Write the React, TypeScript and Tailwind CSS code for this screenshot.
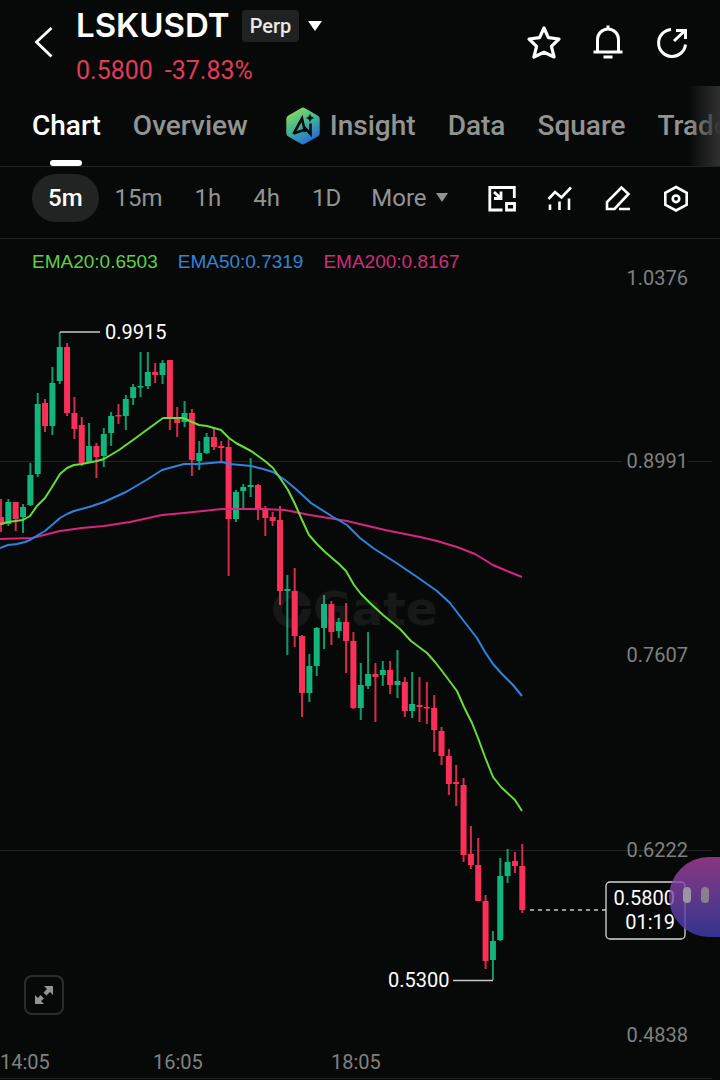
import { useState } from 'react';

type Candle = [number, number, number, number, number];

const UP = '#12b57c';
const DOWN = '#fb3059';
const FIRST_X = 1;
const STEP = 7.342;

// [up, high, body top, body bottom, low] in chart units
const candles: Candle[] = [
  [0, 499, 517, 525, 532], [1, 499, 502, 524, 526], [0, 502, 502, 519, 531], [1, 504, 507, 517, 533],
  [1, 463, 475, 505, 506], [1, 393, 404, 474, 477], [0, 399, 403, 426, 432], [1, 367, 383, 426, 435],
  [1, 332, 347, 381, 384], [0, 343, 347, 413, 416], [0, 397, 413, 429, 439], [0, 417, 425, 463, 466],
  [1, 423, 446, 463, 463], [0, 443, 446, 457, 478], [1, 428, 434, 456, 467], [1, 412, 416, 433, 446],
  [0, 404, 415, 416, 424], [1, 395, 399, 416, 430], [1, 384, 387, 398, 405], [1, 352, 386, 387, 397],
  [1, 352, 372, 386, 389], [0, 363, 372, 375, 383], [1, 360, 363, 375, 384], [0, 360, 360, 417, 430],
  [0, 407, 417, 423, 437], [1, 401, 413, 422, 427], [0, 409, 413, 460, 476], [1, 441, 453, 461, 470],
  [1, 433, 437, 453, 454], [0, 428, 437, 447, 450], [0, 441, 446, 448, 462], [0, 439, 447, 519, 576],
  [1, 490, 492, 519, 522], [1, 484, 487, 491, 509], [1, 458, 485, 487, 497], [0, 484, 485, 509, 520],
  [0, 506, 509, 518, 536], [0, 512, 517, 521, 526], [0, 506, 520, 591, 605], [1, 575, 589, 591, 655],
  [0, 568, 591, 636, 647], [0, 635, 636, 693, 717], [1, 654, 666, 693, 702], [1, 627, 628, 666, 676],
  [1, 595, 604, 628, 649], [0, 601, 604, 632, 645], [1, 618, 622, 631, 638], [0, 603, 622, 641, 673],
  [0, 632, 641, 708, 709], [1, 663, 685, 708, 720], [1, 632, 674, 686, 689], [0, 663, 674, 677, 722],
  [1, 661, 670, 675, 686], [0, 661, 670, 685, 694], [1, 650, 681, 685, 698], [0, 677, 682, 711, 717],
  [1, 672, 704, 711, 718], [0, 677, 705, 707, 722], [0, 682, 707, 708, 724], [0, 695, 708, 730, 752],
  [0, 727, 731, 756, 765], [0, 749, 756, 784, 795], [0, 765, 782, 784, 806], [0, 778, 785, 855, 862],
  [0, 826, 854, 865, 869], [0, 838, 865, 901, 901], [0, 895, 901, 961, 969], [1, 931, 941, 960, 980],
  [1, 858, 876, 940, 941], [1, 849, 862, 876, 883], [0, 852, 861, 866, 873], [0, 844, 866, 910, 913],
];

const averages = [
  {
    label: 'EMA200:0.8167',
    text: 'text-[#d02c7c]',
    stroke: '#d8267f',
    points: '0,539 32,538 60,531 82,528 104,526 130,522 162,515 184,513 222,509 263,509 285,510 310,515 347,521 385,530 420,537 437,541 457,547 475,554 493,565 507,571 522,577',
  },
  {
    label: 'EMA50:0.7319',
    text: 'text-[#3583d4]',
    stroke: '#2f83e0',
    points: '0,548 8,545 17,544 25,542 30,540 38,535 45,531 52,525 60,518 67,514 74,511 89,507 104,502 126,492 148,479 162,470 184,464 199,464 222,462 230,464 251,466 263,469 273,472 285,480 297,490 311,503 333,517 347,525 360,538 373,548 398,564 420,579 437,591 450,603 463,620 477,638 485,652 493,664 502,674 513,685 522,696',
  },
  {
    label: 'EMA20:0.6503',
    text: 'text-[#5fcf45]',
    stroke: '#69dc3c',
    points: '0,524 8,522 23,520 30,516 37,506 45,498 52,487 60,474 67,468 74,465 82,464 97,461 104,459 119,450 133,440 148,429 163,418 183,418 192,422 199,425 207,426 221,430 229,438 236,443 251,451 265,461 273,468 280,478 288,490 295,504 302,520 309,535 317,544 324,551 332,558 339,564 346,571 354,585 361,594 369,602 383,615 400,629 411,641 427,653 435,662 442,671 457,691 464,707 472,723 478,738 485,757 493,777 501,787 515,800 522,811',
  },
];

const priceLabels = [
  { y: 285, value: '1.0376' },
  { y: 468, value: '0.8991' },
  { y: 662, value: '0.7607' },
  { y: 857, value: '0.6222' },
  { y: 1042, value: '0.4838' },
];

const timeLabels = [
  { x: 0, value: '14:05' },
  { x: 153, value: '16:05' },
  { x: 331, value: '18:05' },
];

const tabs = ['Chart', 'Overview', 'Insight', 'Data', 'Square', 'Trade'];
const intervals = ['5m', '15m', '1h', '4h', '1D'];

function AiIcon() {
  return (
    <svg viewBox="0 0 40 40" className="ml-1 size-10">
      <defs>
        <linearGradient id="aiFill" x1="0.2" y1="0" x2="0.7" y2="1">
          <stop offset="0" stopColor="#8fe052" />
          <stop offset="0.5" stopColor="#41b199" />
          <stop offset="1" stopColor="#2563e0" />
        </linearGradient>
      </defs>
      <path d="M17 2.200q2-1.200 4 0l12.700 7.200q2 1.200 2 3.400v14.400q0 2.200-2 3.400L21 37.800q-2 1.200-4 0L4.300 30.600q-2-1.200-2-3.400V12.800q0-2.200 2-3.400Z" fill="url(#aiFill)" />
      <path d="M9.500 28 18 12.500 21 26M9.500 27.500 20 24" fill="none" stroke="#070908" strokeWidth="2.600" />
      <path d="M26.500 17.500v10.500l-6.500-7" fill="none" stroke="#070908" strokeWidth="2.600" />
      <path d="M26 8.500l1.100 2.400 2.400 1.100-2.400 1.100-1.100 2.400-1.100-2.400-2.400-1.100 2.400-1.100Z" fill="#070908" stroke="#070908" strokeWidth="0.600" />
    </svg>
  );
}

function Header() {
  return (
    <header className="flex h-[86px] pr-[30px] pl-8">
      <button aria-label="Back" className="mt-6 h-9 w-6">
        <svg viewBox="0 0 24 36" className="h-9 w-6" fill="none" stroke="#fff" strokeWidth="2.800">
          <path d="M19.500 4 4.500 18l15 14.500" />
        </svg>
      </button>
      <div className="ml-5">
        <div className="flex h-[51px] items-center">
          <h1 className="font-[Inter,sans-serif] text-[33px] leading-none font-semibold text-white">LSKUSDT</h1>
          <span className="ml-3 rounded-[4px] bg-[#202221] px-2 py-0.5 text-[20px] leading-7 font-medium text-[#e8e8e8]">Perp</span>
          <button aria-label="Switch contract" className="ml-2">
            <svg viewBox="0 0 16 12" className="h-3 w-4">
              <path d="M1 1h14L8 11Z" fill="#fff" />
            </svg>
          </button>
        </div>
        <p className="flex gap-3 text-[25px] leading-10 text-[#e23a5c]">
          <span>0.5800</span>
          <span>-37.83%</span>
        </p>
      </div>
      <div className="mt-6 ml-auto flex gap-7">
        <button aria-label="Add to favorites" className="size-9">
          <svg viewBox="0 0 36 36" className="size-9" fill="none" stroke="#fff" strokeWidth="3.200" strokeLinejoin="round">
            <path d="M18 4l4.400 9.600 10.600 1.400-7.600 7.300 2.700 10.700L18 28.300 7.900 33l2.700-10.700L3 15l10.600-1.400Z" />
          </svg>
        </button>
        <button aria-label="Alerts" className="size-9">
          <svg viewBox="0 0 36 36" className="size-9" fill="none" stroke="#fff" strokeWidth="3">
            <path d="M3.500 28h29M7.500 28V15.500a10.500 10.500 0 0 1 21 0V28M18 1.500V5M13.500 33h9" />
          </svg>
        </button>
        <button aria-label="Share" className="size-9">
          <svg viewBox="0 0 36 36" className="size-9" fill="none" stroke="#fff" strokeWidth="3">
            <path d="M17 5.500A13.500 13.500 0 1 0 31.500 20.500M20 17 31 6.500M22 6.500h9.500V15" />
          </svg>
        </button>
      </div>
    </header>
  );
}

function Tabs() {
  const [active, setActive] = useState('Chart');

  return (
    <nav className="relative flex h-[81px] gap-8 overflow-hidden border-b border-[#222423] pl-8">
      {tabs.map((tab) => (
        <button
          key={tab}
          onClick={() => setActive(tab)}
          className={`relative flex shrink-0 items-center gap-1.5 text-[28px] font-medium ${active === tab ? 'text-white' : 'text-[#929493]'}`}
        >
          {tab === 'Insight' && <AiIcon />}
          {tab}
          {active === tab && <span className="absolute bottom-0 left-1/2 h-1.5 w-8 -translate-x-1/2 rounded-[3px] bg-white" />}
        </button>
      ))}
      <div className="pointer-events-none absolute inset-y-0 right-0 w-8 bg-linear-to-r from-transparent to-[#303030]" />
    </nav>
  );
}

function IntervalBar() {
  const [active, setActive] = useState('5m');

  return (
    <div className="flex border-b border-[#222423] pt-[7px] pr-[30px] pb-4 pl-8 text-[24px]">
      {intervals.map((interval) => (
        <button
          key={interval}
          onClick={() => setActive(interval)}
          className={`h-12 rounded-full px-4 ${active === interval ? 'bg-[#222423] font-medium text-white' : 'text-[#929493]'}`}
        >
          {interval}
        </button>
      ))}
      <button className="flex h-12 items-center gap-2 px-3.5 text-[#929493]">
        More
        <svg viewBox="0 0 14 10" className="h-2.5 w-3.5">
          <path d="M1 0h12L7 9Z" fill="#929493" />
        </svg>
      </button>
      <div className="ml-auto flex items-center gap-[30px]">
        <button aria-label="Floating window" className="size-7">
          <svg viewBox="0 0 28 28" className="size-7" fill="none" stroke="#fff" strokeWidth="2.800">
            <path d="M14.500 26H1.800V3.500h24.500V14M6 8l6.500 6M13 7.500v7H6M18.500 19.500h8V26h-8Z" />
          </svg>
        </button>
        <button aria-label="Indicators" className="size-7">
          <svg viewBox="0 0 28 28" className="size-7" fill="none" stroke="#fff" strokeWidth="2.600">
            <path d="M2.500 15 9 8l6.500 5.500L25 3.500M4 20.500v5.500M13.500 17.500V26M23 14.500V26" />
          </svg>
        </button>
        <button aria-label="Draw" className="size-7">
          <svg viewBox="0 0 28 28" className="size-7" fill="none" stroke="#fff" strokeWidth="2.600">
            <path d="M3 25v-7L17.500 3.500l7 6.500L10.500 25ZM15 25h11" />
          </svg>
        </button>
        <button aria-label="Chart settings" className="size-7">
          <svg viewBox="0 0 28 28" className="size-7" fill="none" stroke="#fff" strokeWidth="2.600">
            <path d="M14 3 24.700 8.800v12L14 26.500 3.300 20.800v-12Z" />
            <circle cx="14" cy="14.800" r="3.300" />
          </svg>
        </button>
      </div>
    </div>
  );
}

function PriceChart() {
  return (
    <svg viewBox="0 239 720 841" className="block h-auto w-full font-[Roboto,sans-serif]">
      <g stroke="#232524">
        <path d="M0 461.500H622M688 461.500H712M0 850.500H712M0 1078.500H712" />
      </g>

      {/* Watermark */}
      <g fill="#171918">
        <path d="M292 590a19 19 0 1 0 19 19h-9a10 10 0 1 1-10-10ZM295 590v16h16a17 17 0 0 0-16-16Z" />
        <text x="313" y="625" fontSize="47" fontWeight="700" className="font-['DejaVu_Sans',sans-serif]">Gate</text>
      </g>

      {candles.map(([up, high, top, bottom, low], i) => {
        const x = FIRST_X + i * STEP;
        return (
          <g key={i} fill={up ? UP : DOWN}>
            <rect x={x - 1} y={high} width={2} height={low - high} opacity={0.85} />
            <rect x={x - 3} y={top} width={6} height={Math.max(bottom - top, 1.5)} />
          </g>
        );
      })}

      {averages.map((line) => (
        <polyline key={line.label} points={line.points} fill="none" stroke={line.stroke} strokeWidth="2" strokeLinejoin="round" />
      ))}

      {/* High and low markers */}
      <path d="M60 332H100M453 980.500H493" stroke="#c8c9c8" strokeWidth="1.500" />
      <g fontSize="20" fill="#fff">
        <text x="105" y="339">0.9915</text>
        <text x="388" y="987">0.5300</text>
      </g>

      <g fontSize="20" fill="#7f8180">
        {priceLabels.map((label) => (
          <text key={label.value} x="688" y={label.y} textAnchor="end">{label.value}</text>
        ))}
        {timeLabels.map((label) => (
          <text key={label.value} x={label.x} y="1069">{label.value}</text>
        ))}
      </g>

      {/* Last price */}
      <path d="M530 910H606" stroke="#c8c9c8" strokeWidth="1.500" strokeDasharray="4 4" />
      <rect x="606" y="882" width="79" height="57" rx="4" fill="#070908" stroke="#d6d6d6" strokeWidth="1.300" />
      <g fontSize="20" fill="#fff" textAnchor="end">
        <text x="675" y="905">0.5800</text>
        <text x="675" y="929">01:19</text>
      </g>
    </svg>
  );
}

export default function App() {
  return (
    <div className="min-h-screen overflow-hidden bg-[#070908] font-[Roboto,sans-serif]">
      <Header />
      <Tabs />
      <IntervalBar />
      <main className="relative">
        <PriceChart />
        <div className="absolute top-[11px] left-8 flex gap-5 font-['Liberation_Sans',Arial,sans-serif] text-[19px] leading-6">
          {[...averages].reverse().map((line) => (
            <span key={line.label} className={line.text}>{line.label}</span>
          ))}
        </div>
        <button aria-label="Full screen" className="absolute bottom-[65px] left-6 flex size-10 items-center justify-center rounded-lg border-2 border-[#2b2d2c]">
          <svg viewBox="0 0 20 20" className="size-5" fill="#929493">
            <path d="M10 1h9v9l-3-3-3.500 3.500-3-3L13 4ZM1 10l3 3 2.500-3 3.500 3.500L7 16l3 3H1Z" />
          </svg>
        </button>
        <button aria-label="Open assistant" className="absolute right-0 bottom-[143px] flex h-20 w-[51px] gap-2.5 rounded-l-full bg-linear-to-b from-[#a8409f]/80 to-[#3c3cb0]/80 pt-[30px] pl-3.5">
          <span className="h-4 w-2 rounded-full bg-[#9d94a3]" />
          <span className="h-4 w-2 rounded-full bg-[#88808c]" />
        </button>
      </main>
    </div>
  );
}
